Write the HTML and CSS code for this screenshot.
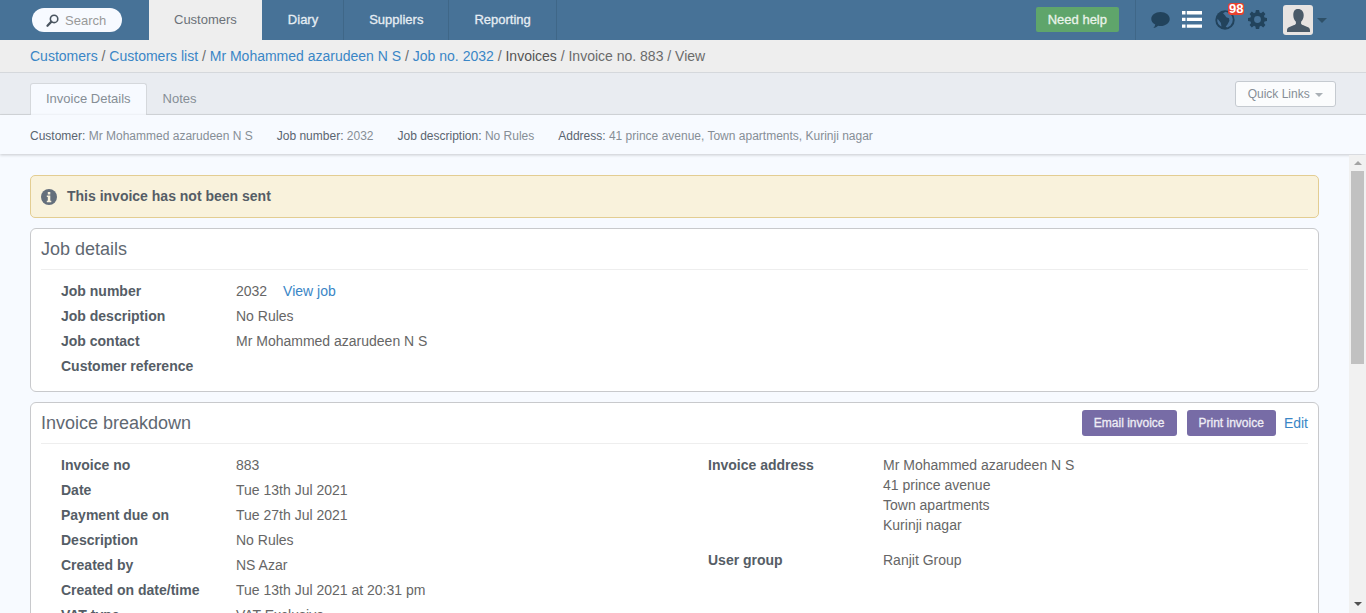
FILE: index.html
```html
<!DOCTYPE html>
<html lang="en">
<head>
    <meta charset="UTF-8">
    <title>Invoice no. 883</title>
    <link rel="stylesheet" href="styles.css">
</head>
<body>
    <header class="topbar">
        <div class="search">
            <svg class="search-icon" viewBox="0 0 14 14"><circle cx="8.7" cy="5.300" r="4" fill="none" stroke="#4a5560" stroke-width="1.700"/><path d="M5.800 8.200 1.600 12.600" stroke="#4a5560" stroke-width="2.400" stroke-linecap="round"/></svg>
            <span>Search</span>
        </div>
        <nav class="mainnav">
            <a class="active" href="#">Customers</a>
            <a href="#">Diary</a>
            <a href="#">Suppliers</a>
            <a href="#">Reporting</a>
        </nav>
        <div class="topright">
            <a class="help" href="#">Need help</a>
            <div class="icons">
                <svg class="ic-chat" viewBox="0 0 20 18"><path fill="#22435c" d="M10 0.500c5.400 0 9.700 3.200 9.700 7.400s-4.300 7.400-9.700 7.400c-.9 0-1.700-.1-2.500-.3-1.300 1.200-3 2.200-5 2.500 1-1.100 1.700-2.300 2-3.800C2 12.400.3 10.300.3 7.900.3 3.700 4.600.5 10 .5z"/></svg>
                <svg class="ic-list" viewBox="0 0 20 17"><path fill="#fff" d="M0 0h3.500v3.400H0zM4.800 0H20v3.400H4.800zM0 6.700h3.500v3.400H0zM4.800 6.700H20v3.400H4.800zM0 13.400h3.500v3.400H0zM4.800 13.400H20v3.400H4.800z"/></svg>
                <div class="globe">
                    <svg viewBox="0 0 20 20"><circle cx="10" cy="10" r="9.700" fill="#22435c"/><path fill="#47729a" d="M10.500 1.800 8 3.200 9.700 5l1.600 2.300 2.700 1 .4 2.400-1.800 3.500-1.900 2.600 1.600.6 3-1.700 2-3.200.5-3-.8-3.300-2.300-2.700-2.600-1.300zM2.600 8.800 2.200 11l1.100 2.900 1.800 1.900 1.400.8-.6-3.500-1.500-2.200z"/></svg>
                    <span class="badge">98</span>
                </div>
                <svg class="ic-gear" viewBox="0 0 20 20"><path fill="#22435c" fill-rule="evenodd" d="M8.300 0h3.400l.5 2.700 1.500.6L16 1.700l2.300 2.400-1.500 2.200.6 1.500 2.600.5v3.400l-2.600.5-.6 1.500 1.500 2.200-2.300 2.400-2.300-1.600-1.500.6-.5 2.700H8.300l-.5-2.700-1.500-.6L4 18.300l-2.300-2.400 1.500-2.200-.6-1.500L0 11.700V8.300l2.600-.5.600-1.500-1.500-2.200L4 1.700l2.300 1.600 1.500-.6zM10 6.400a3.600 3.600 0 1 0 0 7.200 3.600 3.600 0 0 0 0-7.200z"/></svg>
                <div class="avatar">
                    <svg viewBox="0 0 30 30"><rect width="30" height="30" rx="3" fill="#e8e4e2"/><path fill="#4a5a68" d="M15 4c3.600 0 5.700 2.600 5.700 6.300 0 2.700-1.100 5.100-2.600 6.400v2.100c0 1 4 1.900 7 3.500 1.300.7 1.900 1.700 1.900 3.200V27H4v-1.500c0-1.500.6-2.500 1.900-3.200 3-1.600 7-2.500 7-3.500v-2.100c-1.500-1.300-2.600-3.700-2.600-6.400C10.300 6.600 11.400 4 15 4z"/></svg>
                </div>
                <span class="caret dark"></span>
            </div>
        </div>
    </header>

    <div class="breadcrumb">
        <a href="#">Customers</a> / <a href="#">Customers list</a> / <a href="#">Mr Mohammed azarudeen N S</a> / <a href="#">Job no. 2032</a> / <span class="crumb-dark">Invoices</span> / Invoice no. 883 / View
    </div>

    <div class="tabsbar">
        <div class="tabs">
            <a class="tab active" href="#">Invoice Details</a>
            <a class="tab" href="#">Notes</a>
        </div>
        <a class="quick" href="#">Quick Links <span class="caret"></span></a>
    </div>

    <div class="summary">
        <span><b>Customer:</b> Mr Mohammed azarudeen N S</span>
        <span><b>Job number:</b> 2032</span>
        <span><b>Job description:</b> No Rules</span>
        <span><b>Address:</b> 41 prince avenue, Town apartments, Kurinji nagar</span>
    </div>

    <div class="scrollarea">
        <main class="content">
            <div class="alert">
                <svg viewBox="0 0 16 16"><circle cx="8" cy="8" r="8" fill="#646f7c"/><rect x="6.800" y="3" width="2.500" height="2.500" fill="#f9f2dc"/><path fill="#f9f2dc" d="M5.800 6.600h3.500v5.100h1v1.500H5.800v-1.500h1V8.100h-1z"/></svg>
                <span>This invoice has not been sent</span>
            </div>

            <section class="panel">
                <div class="panel-head"><h3>Job details</h3></div>
                <dl class="details">
                    <div class="row"><dt>Job number</dt><dd>2032 <a class="view" href="#">View job</a></dd></div>
                    <div class="row"><dt>Job description</dt><dd>No Rules</dd></div>
                    <div class="row"><dt>Job contact</dt><dd>Mr Mohammed azarudeen N S</dd></div>
                    <div class="row"><dt>Customer reference</dt><dd></dd></div>
                </dl>
            </section>

            <section class="panel">
                <div class="panel-head">
                    <h3>Invoice breakdown</h3>
                    <div class="actions">
                        <a class="btn" href="#">Email invoice</a>
                        <a class="btn" href="#">Print invoice</a>
                        <a class="edit" href="#">Edit</a>
                    </div>
                </div>
                <div class="columns">
                    <dl class="details">
                        <div class="row"><dt>Invoice no</dt><dd>883</dd></div>
                        <div class="row"><dt>Date</dt><dd>Tue 13th Jul 2021</dd></div>
                        <div class="row"><dt>Payment due on</dt><dd>Tue 27th Jul 2021</dd></div>
                        <div class="row"><dt>Description</dt><dd>No Rules</dd></div>
                        <div class="row"><dt>Created by</dt><dd>NS Azar</dd></div>
                        <div class="row"><dt>Created on date/time</dt><dd>Tue 13th Jul 2021 at 20:31 pm</dd></div>
                        <div class="row"><dt>VAT type</dt><dd>VAT Exclusive</dd></div>
                    </dl>
                    <dl class="details">
                        <div class="row multi"><dt>Invoice address</dt><dd>Mr Mohammed azarudeen N S<br>41 prince avenue<br>Town apartments<br>Kurinji nagar</dd></div>
                        <div class="row"><dt>User group</dt><dd>Ranjit Group</dd></div>
                    </dl>
                </div>
            </section>
        </main>
        <div class="scrollbar">
            <span class="arrow"></span>
            <span class="thumb"></span>
            <span class="arrow-down"></span>
        </div>
    </div>
</body>
</html>
```

FILE: styles.css
```css
html, body {
    height: 100%;
}
body {
    font-family: "Liberation Sans", Arial, sans-serif;
    font-size: 14px;
    margin: 0;
    padding: 0;
    background-color: #f7faff;
    color: #555;
    overflow: hidden;
    display: flex;
    flex-direction: column;
}
a {
    color: #3a86c6;
    text-decoration: none;
}

/* Top bar */
.topbar {
    height: 40px;
    flex: none;
    background-color: #477297;
    display: flex;
    justify-content: space-between;
}
.search {
    width: 90px;
    height: 24px;
    margin: 8px 27px 0 32px;
    background-color: #f7faff;
    border-radius: 12px;
    display: flex;
    align-items: center;
    color: #999;
    font-size: 13px;
}
.search-icon {
    width: 13px;
    height: 13px;
    margin: 0 6px 0 14px;
}
.mainnav {
    display: flex;
    flex: 1;
}
.mainnav a {
    height: 40px;
    line-height: 39px;
    padding: 0 25px;
    color: #e6edf3;
    font-size: 13px;
    -webkit-text-stroke: 0.3px;
    border-right: 1px solid #3f6788;
}
.mainnav a.active {
    background-color: #eeeeee;
    background-clip: padding-box;
    color: #6b7178;
    -webkit-text-stroke: 0;
    border-right-color: #477297;
}
.topright {
    display: flex;
    align-items: flex-start;
}
.help {
    height: 25px;
    line-height: 25px;
    margin: 7px 16px 0 0;
    padding: 0 12px;
    background-color: #5fa56b;
    color: #e9f3ea;
    border-radius: 2px;
    font-size: 13px;
    -webkit-text-stroke: 0.3px;
}
.icons {
    width: 230px;
    height: 40px;
    border-left: 1px solid #3f6788;
    position: relative;
}
.icons svg, .globe {
    position: absolute;
}
.ic-chat {
    left: 15px;
    top: 11px;
    width: 19px;
    height: 18px;
}
.ic-list {
    left: 46px;
    top: 11px;
    width: 20px;
    height: 17px;
}
.globe {
    left: 79px;
    top: 10px;
    width: 20px;
    height: 20px;
}
.globe svg {
    width: 20px;
    height: 20px;
}
.badge {
    position: absolute;
    left: 13px;
    top: -7px;
    background-color: #e8412f;
    color: white;
    font-size: 13px;
    font-weight: bold;
    line-height: 12px;
    padding: 0 1px;
    border-radius: 3px;
}
.ic-gear {
    left: 112px;
    top: 10px;
    width: 19px;
    height: 19px;
}
.avatar svg {
    left: 147px;
    top: 5px;
    width: 30px;
    height: 30px;
}
.caret {
    display: inline-block;
    width: 0;
    height: 0;
    border-left: 4px solid transparent;
    border-right: 4px solid transparent;
    border-top: 4px solid #aab0b6;
    vertical-align: middle;
    margin-left: 2px;
}
.caret.dark {
    position: absolute;
    left: 181px;
    top: 18px;
    margin: 0;
    border-top-color: #2e5068;
    border-left-width: 5px;
    border-right-width: 5px;
    border-top-width: 5px;
}

/* Breadcrumb */
.breadcrumb {
    height: 32px;
    line-height: 32px;
    flex: none;
    padding-left: 30px;
    background-color: #eeeeee;
    border-bottom: 1px solid #d5d8dc;
    color: #6b6b6b;
}
.crumb-dark {
    color: #555;
}

/* Tabs */
.tabsbar {
    height: 41px;
    flex: none;
    background-color: #e9ecf1;
    border-bottom: 1px solid #d5d8dc;
    padding: 0 30px;
    display: flex;
    justify-content: space-between;
    position: relative;
}
.tabs {
    display: flex;
    margin-top: 10px;
}
.tab {
    height: 31px;
    line-height: 30px;
    padding: 0 15px;
    font-size: 13px;
    color: #868e96;
    border: 1px solid transparent;
    border-bottom: none;
}
.tab.active {
    background-color: #f7faff;
    border-color: #d5d8dc;
    border-radius: 3px 3px 0 0;
    height: 32px;
}
.quick {
    height: 24px;
    line-height: 24px;
    margin-top: 8px;
    padding: 0 12px;
    background-color: #fbfcfd;
    border: 1px solid #c5cad0;
    border-radius: 3px;
    font-size: 12px;
    color: #868e96;
}

/* Summary strip */
.summary {
    height: 39px;
    line-height: 42px;
    flex: none;
    padding-left: 30px;
    font-size: 12px;
    color: #868e96;
    background-color: #f7faff;
    box-shadow: 0 1px 3px rgba(0, 0, 0, 0.2);
    display: flex;
    gap: 24px;
    position: relative;
}
.summary b {
    font-weight: normal;
    color: #5a6570;
}

/* Scrolling part */
.scrollarea {
    flex: 1;
    display: flex;
    min-height: 0;
}
.content {
    flex: 1;
    padding: 21px 30px 0;
    overflow: hidden;
}
.scrollbar {
    width: 17px;
    flex: none;
    background-color: #f1f1f1;
    position: relative;
    margin-top: 1px;
}
.arrow {
    display: block;
    width: 0;
    height: 0;
    margin: 6px auto 0;
    border-left: 4px solid transparent;
    border-right: 4px solid transparent;
    border-bottom: 4px solid #a3a3a3;
}
.thumb {
    display: block;
    width: 13px;
    height: 193px;
    margin: 6px 0 0 2px;
    background-color: #c1c1c1;
}
.arrow-down {
    position: absolute;
    left: 5px;
    bottom: 7px;
    width: 0;
    height: 0;
    border-left: 4px solid transparent;
    border-right: 4px solid transparent;
    border-top: 4px solid #505050;
}
.alert {
    height: 39px;
    padding: 0 0 2px 10px;
    background-color: #f9f2dc;
    border: 1px solid #e3cd92;
    border-radius: 5px;
    display: flex;
    align-items: center;
    font-weight: bold;
    color: #555d66;
    margin-bottom: 10px;
}
.alert svg {
    width: 16px;
    height: 16px;
    margin: 2px 10px 0 0;
}
.panel {
    background-color: white;
    border: 1px solid #c8c9cc;
    border-radius: 6px;
    padding: 0 10px;
    margin-bottom: 10px;
}
.panel-head {
    height: 40px;
    border-bottom: 1px solid #eeeeee;
    display: flex;
    justify-content: space-between;
    align-items: center;
}
.panel-head h3 {
    margin: 0;
    font-size: 18px;
    font-weight: normal;
    color: #5f6872;
}
.actions {
    display: flex;
    align-items: center;
}
.btn {
    height: 26px;
    line-height: 26px;
    padding: 0 12px;
    margin-right: 10px;
    background-color: #776ca6;
    color: #eeedf5;
    border-radius: 3px;
    font-size: 12px;
    -webkit-text-stroke: 0.3px;
}
.edit {
    margin-left: -2px;
}

/* Label / value rows */
.details {
    margin: 0;
    padding: 9px 0 12px 20px;
}
.row {
    display: flex;
    min-height: 25px;
    line-height: 25px;
}
.row.multi {
    line-height: 20px;
    padding: 2px 0 13px;
}
.row dt {
    width: 175px;
    flex: none;
    font-weight: bold;
    color: #555d66;
}
.row dd {
    margin: 0;
    color: #666;
}
.view {
    margin-left: 12px;
}
.columns {
    display: grid;
    grid-template-columns: 647px 1fr;
}
```
